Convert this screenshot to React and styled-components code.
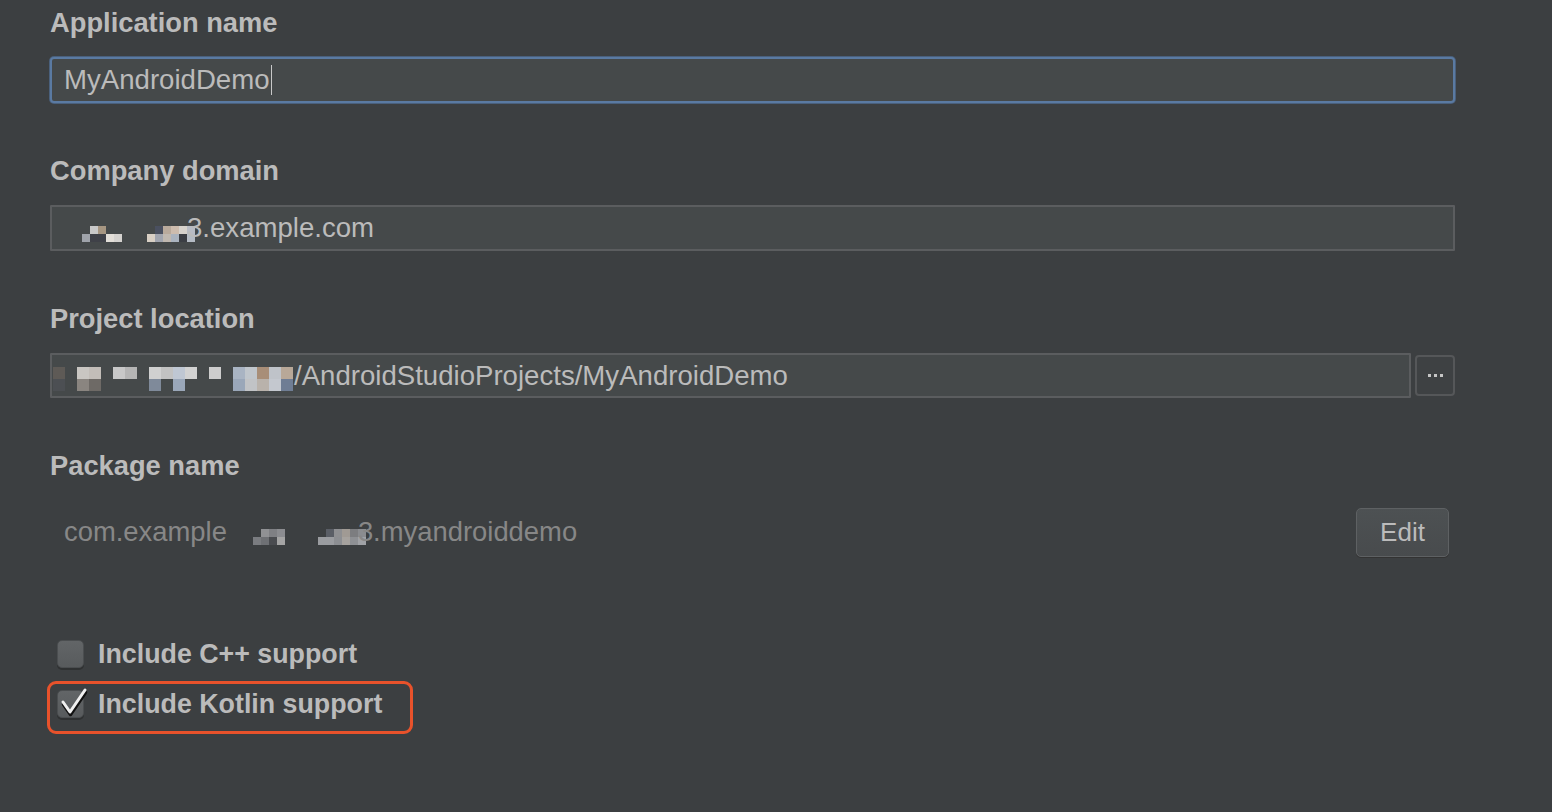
import React from "react";
import styled, { createGlobalStyle } from "styled-components";

const Global = createGlobalStyle`
  html, body { margin: 0; padding: 0; background: #3c3f41; }
  body { font-family: "Liberation Sans", Arial, sans-serif; }
`;

const Page = styled.div`
  width: 1552px;
  height: 812px;
  background: #3c3f41;
  box-sizing: border-box;
  padding: 3px 97px 0 50px;
  overflow: hidden;
`;

const Field = styled.div`
  display: flex;
  flex-direction: column;
  margin-bottom: ${(p) => p.$mb ?? 48}px;
`;

const Label = styled.div`
  height: 40px;
  line-height: 40px;
  font-size: 27.3px;
  font-weight: 700;
  color: #bbbbbb;
  margin-bottom: 14px;
`;

const InputBox = styled.div`
  position: relative;
  display: flex;
  align-items: center;
  box-sizing: border-box;
  height: ${(p) => p.$h ?? 46}px;
  flex: 1;
  background: #45494a;
  border: ${(p) => (p.$focused ? "2px solid #5a7aa2" : "2px solid #5b5d5f")};
  border-radius: ${(p) => (p.$focused ? "4px" : "1px")};
  box-shadow: ${(p) => (p.$focused ? "0 0 0 1px #4a607c" : "none")};
  padding-left: ${(p) => p.$pl ?? 12}px;
  font-size: 27.6px;
  color: #bbbbbb;
  overflow: hidden;
  white-space: nowrap;
`;

const Caret = styled.span`
  display: inline-block;
  width: 1px;
  height: 30px;
  background: #c8c8c8;
  margin-left: 1px;
`;

const Row = styled.div`
  display: flex;
  align-items: center;
  gap: ${(p) => p.$gap ?? 0}px;
`;

const BrowseButton = styled.div`
  box-sizing: border-box;
  width: 40px;
  height: 41px;
  border: 2px solid #555759;
  border-radius: 4px;
  background: #3e4143;
  display: flex;
  align-items: center;
  justify-content: center;
  gap: 3px;
`;

const Dot = styled.span`
  width: 3px;
  height: 3px;
  background: #c6c6c6;
`;

const PackageRow = styled.div`
  display: flex;
  align-items: center;
  justify-content: space-between;
  height: 64px;
  padding: 0 6px 0 14px;
`;

const PackageText = styled.div`
  display: flex;
  align-items: center;
  font-size: 27.4px;
  color: #878787;
  white-space: nowrap;
`;

const EditButton = styled.div`
  box-sizing: border-box;
  width: 93px;
  height: 49px;
  border: 1px solid #5e6163;
  border-radius: 5px;
  background: linear-gradient(#4d5153, #484b4d);
  box-shadow: 0 1px 0 #333;
  color: #bbbbbb;
  font-size: 26px;
  display: flex;
  align-items: center;
  justify-content: center;
`;

const Checks = styled.div`
  display: flex;
  flex-direction: column;
  gap: 20px;
  margin-top: 75px;
  padding-left: 7px;
`;

const CheckRow = styled.div`
  position: relative;
  display: flex;
  align-items: center;
  gap: 14px;
  height: 30px;
  align-self: flex-start;
  ${(p) =>
    p.$highlight &&
    `
    &::after {
      content: "";
      position: absolute;
      left: -10px;
      top: -8px;
      width: 366px;
      height: 53px;
      box-sizing: border-box;
      border: 3.5px solid #e8522b;
      border-radius: 9px;
      pointer-events: none;
    }
  `}
`;

const Box = styled.div`
  position: relative;
  box-sizing: border-box;
  width: 27px;
  height: 28px;
  border-radius: 5px;
  background: linear-gradient(#626567, #585b5d);
  border: 1px solid #4b4e50;
  box-shadow: 0 2px 0 #2f3132;
`;

const CheckSvg = styled.svg`
  position: absolute;
  left: 0px;
  top: -7px;
  overflow: visible;
`;

const CheckText = styled.span`
  font-size: 26.8px;
  font-weight: 700;
  color: #bbbbbb;
  white-space: nowrap;
`;

const MosaicWrap = styled.span`
  display: inline-grid;
  grid-auto-flow: column;
  grid-template-rows: repeat(${(p) => p.$rows}, ${(p) => p.$cell}px);
  grid-auto-columns: ${(p) => p.$cell}px;
  margin-left: ${(p) => p.$ml ?? 0}px;
  margin-top: ${(p) => p.$mt ?? 0}px;
  align-self: center;
`;

const Cell = styled.span`
  display: block;
`;

function Mosaic({ cols, cell = 8, ml, mt }) {
  const rows = cols[0].length;
  return (
    <MosaicWrap $rows={rows} $cell={cell} $ml={ml} $mt={mt}>
      {cols.flat().map((c, i) => (
        <Cell key={i} style={{ background: c }} />
      ))}
    </MosaicWrap>
  );
}

const T = "transparent";

const domainA = [
  [T, "#9fa3aa"],
  ["#c9c9c9", "#3f4148"],
  ["#a69682", "#3f4148"],
  [T, "#e2ded8"],
  [T, "#d4d2cf"],
];
const domainB = [
  [T, "#d8cfc4"],
  ["#4a5060", "#a0a4ae"],
  ["#b9aa9c", "#c0b8b0"],
  ["#cdbcae", "#aab3bf"],
  ["#d6d2cc", "#3b3e44"],
  ["#b8bcc4", "#b4bbc4"],
];

const locA = [
  ["#5e5a56", "#4c4f53"],
  [T, T],
  ["#c9c6c2", "#8a8580"],
  ["#c2bdb8", "#6e6a66"],
  [T, T],
  ["#c8c8c8", T],
  ["#b5b5b5", T],
  [T, T],
  ["#d0d0d0", "#7f8a9a"],
  ["#c2c2c2", T],
  ["#bfc7d3", "#9aa7b9"],
  ["#d2d2d2", T],
  [T, T],
  ["#cdcdcd", T],
  [T, T],
  ["#a9b4c3", "#9aa7b9"],
  ["#c0c6cc", "#c1c3c6"],
  ["#a88e78", "#b9b2ab"],
  ["#bfc3c9", "#c4c8cf"],
  ["#b8a898", "#6f7d94"],
];

const pkgA = [
  [T, "#7a7c80"],
  ["#909194", "#6e7074"],
  ["#7f8084", "#4a4c50"],
  ["#8b8c90", "#a4a4a4"],
  [T, T],
];
const pkgB = [
  [T, "#9a9ca0"],
  ["#5a5e66", "#9a9ca0"],
  ["#8e8f92", "#8c8e92"],
  ["#a09a94", "#a6a29e"],
  ["#7c7d80", "#8e9094"],
  ["#8a8c90", "#a0a2a6"],
];

export default function App() {
  return (
    <>
      <Global />
      <Page>
        <Field>
          <Label>Application name</Label>
          <Row>
            <InputBox $focused $pl={12}>
              MyAndroidDemo
              <Caret />
            </InputBox>
          </Row>
        </Field>

        <Field>
          <Label>Company domain</Label>
          <Row>
            <InputBox>
              <Mosaic cols={domainA} cell={8} ml={18} mt={12} />
              <Mosaic cols={domainB} cell={8} ml={25} mt={12} />
              <span style={{ marginLeft: -8 }}>3.example.com</span>
            </InputBox>
          </Row>
        </Field>

        <Field>
          <Label>Project location</Label>
          <Row $gap={4}>
            <InputBox $h={45} $pl={1}>
              <Mosaic cols={locA} cell={12} mt={7} />
              <span style={{ marginLeft: 1 }}>
                /AndroidStudioProjects/MyAndroidDemo
              </span>
            </InputBox>
            <BrowseButton>
              <Dot />
              <Dot />
              <Dot />
            </BrowseButton>
          </Row>
        </Field>

        <Field $mb={0}>
          <Label>Package name</Label>
          <PackageRow>
            <PackageText>
              com.example
              <Mosaic cols={pkgA} cell={8} ml={26} mt={9} />
              <Mosaic cols={pkgB} cell={8} ml={25} mt={9} />
              <span style={{ marginLeft: -8 }}>3.myandroiddemo</span>
            </PackageText>
            <EditButton>Edit</EditButton>
          </PackageRow>
        </Field>

        <Checks>
          <CheckRow>
            <Box />
            <CheckText>Include C++ support</CheckText>
          </CheckRow>
          <CheckRow $highlight>
            <Box>
              <CheckSvg width="30" height="34" viewBox="0 0 30 34">
                <path
                  d="M5 18 L12 28 L27 6"
                  fill="none"
                  stroke="#111111"
                  strokeWidth="3.5"
                  strokeLinecap="round"
                  strokeLinejoin="round"
                  transform="translate(0.5 2.5)"
                />
                <path
                  d="M5 18 L12 28 L27 6"
                  fill="none"
                  stroke="#f0f0f0"
                  strokeWidth="3"
                  strokeLinecap="round"
                  strokeLinejoin="round"
                />
              </CheckSvg>
            </Box>
            <CheckText>Include Kotlin support</CheckText>
          </CheckRow>
        </Checks>
      </Page>
    </>
  );
}
